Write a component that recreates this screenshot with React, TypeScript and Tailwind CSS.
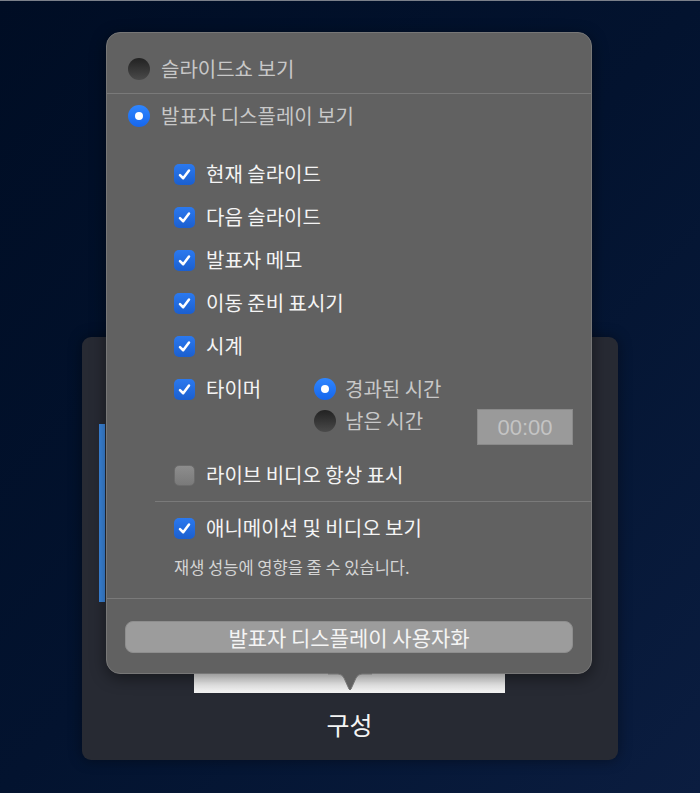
import React from 'react';

const font = { fontFamily: '"Noto Sans CJK KR", "Noto Sans", sans-serif' };

function Check({ on = true }: { on?: boolean }) {
  if (!on) {
    return (
      <span className="w-[21px] h-[21px] shrink-0 rounded-[5px] bg-linear-to-b from-[#8d8d8d] to-[#7a7a7a] border border-[#6c6c6c]" />
    );
  }
  return (
    <span className="w-[21px] h-[21px] shrink-0 rounded-[5px] bg-linear-to-b from-[#2b79ef] to-[#1b5fcf] flex items-center justify-center">
      <svg width="15" height="15" viewBox="0 0 16 16">
        <path d="M3.2 8.6 L6.6 12 L12.8 3.8" stroke="white" strokeWidth="2.7" fill="none" strokeLinecap="round" strokeLinejoin="round" />
      </svg>
    </span>
  );
}

function Radio({ on = false }: { on?: boolean }) {
  if (on) {
    return (
      <span className="w-[22px] h-[22px] shrink-0 rounded-full bg-linear-to-b from-[#2f86ff] to-[#1666ec] flex items-center justify-center">
        <span className="w-[8px] h-[8px] rounded-full bg-white" />
      </span>
    );
  }
  return <span className="w-[22px] h-[22px] shrink-0 rounded-full bg-linear-to-b from-[#222] to-[#4a4a4a]" />;
}

function CheckRow({ label, on = true }: { label: string; on?: boolean }) {
  return (
    <div className="h-[22px] flex items-center gap-[11px] pl-[67px]">
      <Check on={on} />
      <span className="text-[20px] text-[#f4f4f4] leading-none">{label}</span>
    </div>
  );
}

export default function App() {
  return (
    <div
      className="relative w-[700px] h-[793px] overflow-hidden border-t border-[#7b808a] bg-linear-to-br from-[#000d24] via-[#03132f] to-[#0b1d40]"
      style={font}
    >
      {/* card behind the popover */}
      <div className="ml-[82px] mt-[336px] w-[536px] h-[423px] rounded-[9px] bg-[#272a33] shadow-[0_0_14px_rgba(0,0,0,0.4)] flex">
        <div className="ml-[17px] mt-[87px] w-[6px] h-[178px] bg-[#3b86dc]" />
        <div className="ml-[89px] flex flex-col items-center">
          <div className="mt-[320px] w-[311px] h-[36px] bg-linear-to-b from-[#dcdcdc] to-[#f4f4f4]" />
          <div className="mt-[19px] text-[25px] text-[#f4f4f4] leading-none">구성</div>
        </div>
      </div>

      {/* popover */}
      <div className="absolute left-[106px] top-[31px] w-[486px] h-[642px] rounded-[14px] bg-[#616161] border border-[#777] shadow-[0_4px_16px_rgba(0,0,0,0.45)] flex flex-col">
        <div className="h-[60px] flex items-center gap-[11px] pl-[21px] pt-[11px]">
          <Radio />
          <span className="text-[20px] text-[#c8c8c8] leading-none">슬라이드쇼 보기</span>
        </div>
        <div className="h-px bg-[#7a7a7a]" />
        <div className="mt-[10px] h-[24px] flex items-center gap-[11px] pl-[21px]">
          <Radio on />
          <span className="text-[20px] text-[#c8c8c8] leading-none">발표자 디스플레이 보기</span>
        </div>

        <div className="mt-[35px] flex flex-col gap-[21px]">
          <CheckRow label="현재 슬라이드" />
          <CheckRow label="다음 슬라이드" />
          <CheckRow label="발표자 메모" />
          <CheckRow label="이동 준비 표시기" />
          <CheckRow label="시계" />
        </div>

        <div className="mt-[21px] flex pl-[67px] pr-[18px]">
          <div className="h-[22px] flex items-center gap-[11px] w-[140px]">
            <Check />
            <span className="text-[20px] text-[#f4f4f4] leading-none">타이머</span>
          </div>
          <div className="flex flex-col gap-[10px]">
            <div className="h-[22px] flex items-center gap-[9px]">
              <Radio on />
              <span className="text-[20px] text-[#c8c8c8] leading-none">경과된 시간</span>
            </div>
            <div className="h-[22px] flex items-center gap-[9px]">
              <Radio />
              <span className="text-[20px] text-[#c8c8c8] leading-none">남은 시간</span>
            </div>
          </div>
          <div
            className="ml-auto mt-[31px] w-[96px] h-[36px] bg-[#9a9a9a] border border-[#8a8a8a] flex items-center justify-center text-[22px] text-[#c4c4c4]"
            style={{ fontFamily: '"Liberation Sans", Arial, sans-serif' }}
          >
            00:00
          </div>
        </div>

        <div className="mt-[19px]">
          <CheckRow label="라이브 비디오 항상 표시" on={false} />
        </div>
        <div className="mt-[15px] ml-[48px] h-px bg-[#7a7a7a]" />
        <div className="mt-[15px]">
          <CheckRow label="애니메이션 및 비디오 보기" />
        </div>
        <div className="mt-[18px] pl-[67px] text-[16.5px] text-[#d4d4d4] leading-[20px]">
          재생 성능에 영향을 줄 수 있습니다.
        </div>
        <div className="mt-[21px] h-px bg-[#7a7a7a]" />
        <div className="mt-[22px] mx-[18px] h-[32px] rounded-[8px] bg-[#9c9c9c] border border-[#8e8e8e] flex items-center justify-center text-[21px] text-[#f4f4f4] leading-none">
          발표자 디스플레이 사용자화
        </div>

        {/* arrow */}
        <svg className="absolute left-[221px] top-[640px]" width="44" height="22" viewBox="0 0 44 22">
          <path d="M0 1 L10 1 Q14 1 16 5 L21 16 Q22 18 23 16 L28 5 Q30 1 34 1 L44 1 L44 0 L0 0 Z" fill="#616161" />
          <path d="M0 1 L10 1 Q14 1 16 5 L21 16 Q22 18 23 16 L28 5 Q30 1 34 1 L44 1" fill="none" stroke="#777" strokeWidth="1" />
        </svg>
      </div>
    </div>
  );
}
